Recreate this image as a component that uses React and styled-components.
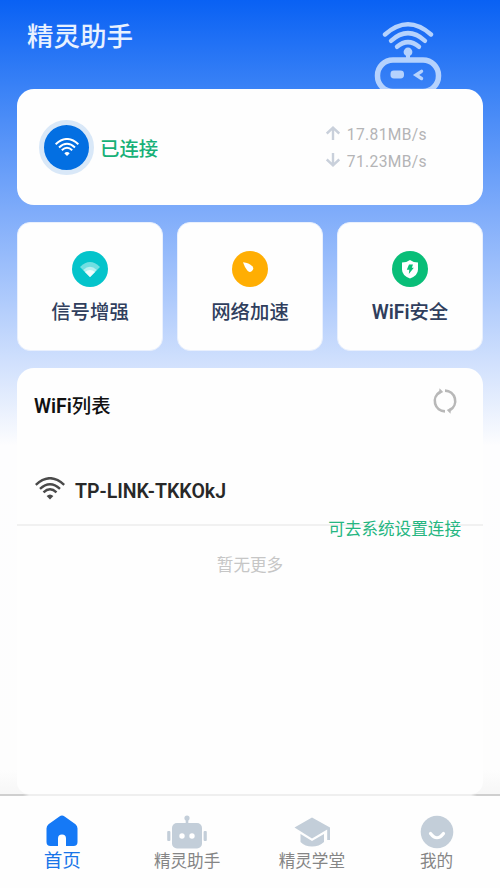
import styled, { createGlobalStyle } from "styled-components";

const GlobalStyle = createGlobalStyle`
  * {
    box-sizing: border-box;
  }
  body {
    margin: 0;
    font-family: Roboto, "Noto Sans CJK SC", sans-serif;
  }
`;

const Page = styled.div`
  display: flex;
  flex-direction: column;
  width: 500px;
  height: 888px;
  overflow: hidden;
  background: linear-gradient(
      180deg,
      #0961f4 0px,
      #3a82f6 88px,
      #7facfa 212px,
      #d0e0fd 362px,
      #fdfdfe 446px,
      #fdfdfd 770px,
      #f6f6f6 796px
    )
    #fdfdfe;
`;

const Header = styled.header`
  display: flex;
  justify-content: space-between;
  height: 89px;
  padding: 18px 58px 0 27px;
  overflow: hidden;
`;

const Title = styled.h1`
  margin: 0;
  font-size: 26.5px;
  font-weight: 500;
  line-height: 38px;
  color: #e8f1ff;
`;

const Robot = styled.svg`
  flex: none;
  width: 68px;
  height: 80px;
`;

const Content = styled.main`
  flex: 1;
  min-height: 0;
  display: flex;
  flex-direction: column;
  gap: 17px;
  padding: 0 17px;
`;

const StatusCard = styled.section`
  display: flex;
  align-items: center;
  justify-content: space-between;
  flex: none;
  height: 116px;
  padding: 0 56px 0 22px;
  border-radius: 17px;
  background: #fefefe;
`;

const Connection = styled.div`
  display: flex;
  align-items: center;
  gap: 6px;
  font-size: 19.4px;
  font-weight: 500;
  color: #17b077;
`;

const WifiBadge = styled.div`
  display: flex;
  align-items: center;
  justify-content: center;
  width: 55px;
  height: 55px;
  border: 5px solid #d9e8f8;
  border-radius: 50%;
  background: #036fe2;
`;

const Speeds = styled.div`
  display: flex;
  flex-direction: column;
  gap: 1px;
  padding-top: 2px;
`;

const Speed = styled.div`
  display: flex;
  align-items: center;
  gap: 7px;
  height: 26px;
  font-size: 15.6px;
  letter-spacing: 0.35px;
  color: #b4b4b6;

  svg {
    margin-top: -3px;
  }
`;

const Tiles = styled.section`
  display: grid;
  grid-template-columns: repeat(3, 1fr);
  gap: 14px;
  flex: none;
  height: 129px;
`;

const Tile = styled.div`
  display: flex;
  flex-direction: column;
  align-items: center;
  padding-top: 28px;
  border: 1px solid #e9f0fd;
  border-radius: 13px;
  background: #fefefe;
`;

const TileLabel = styled.span`
  margin-top: 11px;
  font-size: 19.4px;
  font-weight: 500;
  line-height: 29px;
  color: #303e5d;
`;

const Latin = styled.span`
  font-weight: 600;
`;

const ListCard = styled.section`
  flex: 1;
  border-radius: 17px 17px 12px 12px;
  background: #fefefe;
`;

const ListHeader = styled.div`
  display: flex;
  align-items: center;
  justify-content: space-between;
  height: 65px;
  padding: 7px 25px 0 17px;

  svg {
    margin-top: -7px;
  }
`;

const ListTitle = styled.h2`
  margin: 0;
  font-size: 19.4px;
  font-weight: 500;
  color: #111;
`;

const Network = styled.div`
  display: flex;
  align-items: center;
  gap: 10px;
  height: 93px;
  padding: 25px 0 0 18px;
  border-bottom: 2px solid #f1f1f1;
  font-size: 19.5px;
  font-weight: 600;
  color: #282828;

  svg {
    margin-top: -6px;
  }
`;

const Hint = styled.div`
  position: relative;
  height: 20px;
  margin-top: -8px;
  padding-right: 22px;
  text-align: right;
  font-size: 16.6px;
  line-height: 24px;
  color: #25b681;
`;

const Empty = styled.div`
  margin-top: 16px;
  text-align: center;
  font-size: 16.6px;
  line-height: 24px;
  color: #c6c6c6;
`;

const TabBar = styled.nav`
  display: grid;
  grid-template-columns: repeat(4, 1fr);
  flex: none;
  height: 94px;
  padding: 20px 1px 0 0;
  background: linear-gradient(90deg, #cfcfcf 23px, #efefef 29px, #efefef 471px, #cfcfcf 477px) top / 100% 2px
    no-repeat #fefefe;
`;

const Tab = styled.div`
  display: flex;
  flex-direction: column;
  align-items: center;
  font-size: ${(props) => (props.$active ? "18.6px" : "16.6px")};
  line-height: 20px;
  color: ${(props) => (props.$active ? "#1975e8" : "#858585")};

  svg {
    flex: none;
    margin-bottom: ${(props) => (props.$active ? "1px" : "2px")};
  }
`;

const WifiIcon = ({ width, color }) => (
  <svg width={width} height={(width * 23) / 30} viewBox="0 0 30 23" fill="none" stroke={color} strokeWidth="2.4">
    <path d="M.8 7.8Q15-5.4 29.2 7.8" />
    <path d="M5 11.8Q15 2.6 25 11.8" />
    <path d="M8.5 15.4Q15 9.2 21.5 15.4" />
    <path d="M11.6 19Q15 15.9 18.4 19L15 22.5Z" fill={color} stroke="none" />
  </svg>
);

const ArrowIcon = ({ down }) => (
  <svg width="14" height="14" viewBox="0 0 14 14" fill="none" stroke="#c9d0db" strokeWidth="2.4">
    <path d={down ? "M7 0V12M.8 6.5L7 12.3L13.2 6.5" : "M7 14V2M.8 7.5L7 1.7L13.2 7.5"} />
  </svg>
);

const SignalIcon = () => (
  <svg width="36" height="36" viewBox="0 0 36 36">
    <circle cx="18" cy="18" r="18" fill="#04c4cb" />
    <path d="M8 16Q18 6 28 16L18 26Z" fill="#70dfe2" />
    <path d="M11.3 19Q18 12.5 24.7 19L18 26Z" fill="#b9f0f1" />
    <path d="M13 21Q18 17 23 21L18 26Z" fill="#effcfc" />
  </svg>
);

const SpeedIcon = () => (
  <svg width="36" height="36" viewBox="0 0 36 36">
    <circle cx="18" cy="18" r="18" fill="#ffae03" />
    <path d="M11 11.3Q17 12 20.3 15.3A3.1 3.1 0 1 1 15.3 19.6Q12.5 16 11 11.3Z" fill="#fff" />
  </svg>
);

const ShieldIcon = () => (
  <svg width="36" height="36" viewBox="0 0 36 36">
    <circle cx="18" cy="18" r="18" fill="#09be78" />
    <path d="M18 9Q21.5 11.5 26 11.5V18.5Q26 24.5 18 27.5Q10 24.5 10 18.5V11.5Q14.5 11.5 18 9Z" fill="#fff" />
    <path d="M17 13.5H21L19.8 16.7H21.8L16.8 23L17.3 18.8H14.8Z" fill="#09be78" />
  </svg>
);

const RefreshIcon = () => (
  <svg width="26" height="28" viewBox="0 0 26 28" fill="none" stroke="#b8b8b8" strokeWidth="2.6">
    <path d="M13 3.6A10.4 10.4 0 0 1 18 23" />
    <path d="M13 24.4A10.4 10.4 0 0 1 8 5" />
    <path d="M7.5 1.2L11.2 5L6.8 7.6Z" fill="#b8b8b8" stroke="none" />
    <path d="M18.5 26.8L14.8 23L19.2 20.4Z" fill="#b8b8b8" stroke="none" />
  </svg>
);

const HomeIcon = () => (
  <svg width="32" height="36" viewBox="0 0 32 36">
    <path
      d="M13.4 2.5Q16 .5 18.6 2.5L29.5 10.3Q31.5 12 31.5 14.5V28Q31.5 32 27.5 32H20V24.5A4 4 0 0 0 12 24.5V32H4.5Q.5 32 .5 28V14.5Q.5 12 2.5 10.3Z"
      fill="#1579f6"
    />
  </svg>
);

const AssistantIcon = () => (
  <svg width="40" height="36" viewBox="0 0 40 36" fill="#c3ced9">
    <circle cx="20" cy="4" r="2.6" />
    <path d="M18.7 5H21.3V12H18.7Z" />
    <rect x="5" y="9" width="30" height="25.5" rx="5" />
    <rect x=".2" y="17" width="3.2" height="10" rx="1" />
    <rect x="36.6" y="17" width="3.2" height="10" rx="1" />
    <circle cx="15" cy="22" r="2.7" fill="#fff" />
    <circle cx="25" cy="22" r="2.7" fill="#fff" />
  </svg>
);

const SchoolIcon = () => (
  <svg width="36" height="36" viewBox="0 0 36 36" fill="#c3ced9">
    <path d="M18 3.5L36 13.5V26H33.2V15.5L18 24.5L.5 13.5Z" />
    <path d="M6.5 20L18 27L30 20V28Q25 32.5 18 32.5Q11 32.5 6.5 28Z" />
  </svg>
);

const ProfileIcon = () => (
  <svg width="34" height="36" viewBox="0 0 34 36">
    <circle cx="17" cy="18" r="16.3" fill="#c3ced9" />
    <path d="M10.5 19.5Q17 28 23.5 19.5" fill="none" stroke="#fff" strokeWidth="3.2" strokeLinecap="round" />
  </svg>
);

const tiles = [
  { label: "信号增强", Icon: SignalIcon },
  { label: "网络加速", Icon: SpeedIcon },
  { latin: "WiFi", label: "安全", Icon: ShieldIcon },
];

const tabs = [
  { label: "首页", Icon: HomeIcon, active: true },
  { label: "精灵助手", Icon: AssistantIcon },
  { label: "精灵学堂", Icon: SchoolIcon },
  { label: "我的", Icon: ProfileIcon },
];

const App = () => {
  return (
    <>
      <GlobalStyle />
      <Page>
        <Header>
          <Title>精灵助手</Title>
          <Robot viewBox="0 0 68 80" fill="none" stroke="#b5d2fd" strokeLinecap="round">
            <path d="M11 16.5Q34-4 57 16.5" strokeWidth="4.4" />
            <path d="M17 22.8Q34 7.5 51 22.8" strokeWidth="4.4" />
            <path d="M23 28.8Q34 19.5 45 28.8" strokeWidth="4.4" />
            <circle cx="34" cy="34" r="4.4" fill="#b5d2fd" stroke="none" />
            <path d="M34 35V41" strokeWidth="4" />
            <rect x="3.5" y="42" width="61" height="31.5" rx="15.5" strokeWidth="5.5" />
            <rect x="16.5" y="52.5" width="13.5" height="8" rx="3.4" fill="#b5d2fd" stroke="none" />
            <path d="M47.5 53.3L42 57L47.5 60.5" strokeWidth="3.4" />
          </Robot>
        </Header>
        <Content>
          <StatusCard>
            <Connection>
              <WifiBadge>
                <WifiIcon width={24} color="#fff" />
              </WifiBadge>
              已连接
            </Connection>
            <Speeds>
              <Speed>
                <ArrowIcon />
                17.81MB/s
              </Speed>
              <Speed>
                <ArrowIcon down />
                71.23MB/s
              </Speed>
            </Speeds>
          </StatusCard>
          <Tiles>
            {tiles.map(({ latin, label, Icon }) => (
              <Tile key={label}>
                <Icon />
                <TileLabel>
                  {latin && <Latin>{latin}</Latin>}
                  {label}
                </TileLabel>
              </Tile>
            ))}
          </Tiles>
          <ListCard>
            <ListHeader>
              <ListTitle>
                <Latin>WiFi</Latin>列表
              </ListTitle>
              <RefreshIcon />
            </ListHeader>
            <Network>
              <WifiIcon width={30} color="#4a4a4a" />
              TP-LINK-TKKOkJ
            </Network>
            <Hint>可去系统设置连接</Hint>
            <Empty>暂无更多</Empty>
          </ListCard>
        </Content>
        <TabBar>
          {tabs.map(({ label, Icon, active }) => (
            <Tab key={label} $active={active}>
              <Icon />
              {label}
            </Tab>
          ))}
        </TabBar>
      </Page>
    </>
  );
};

export default App;
